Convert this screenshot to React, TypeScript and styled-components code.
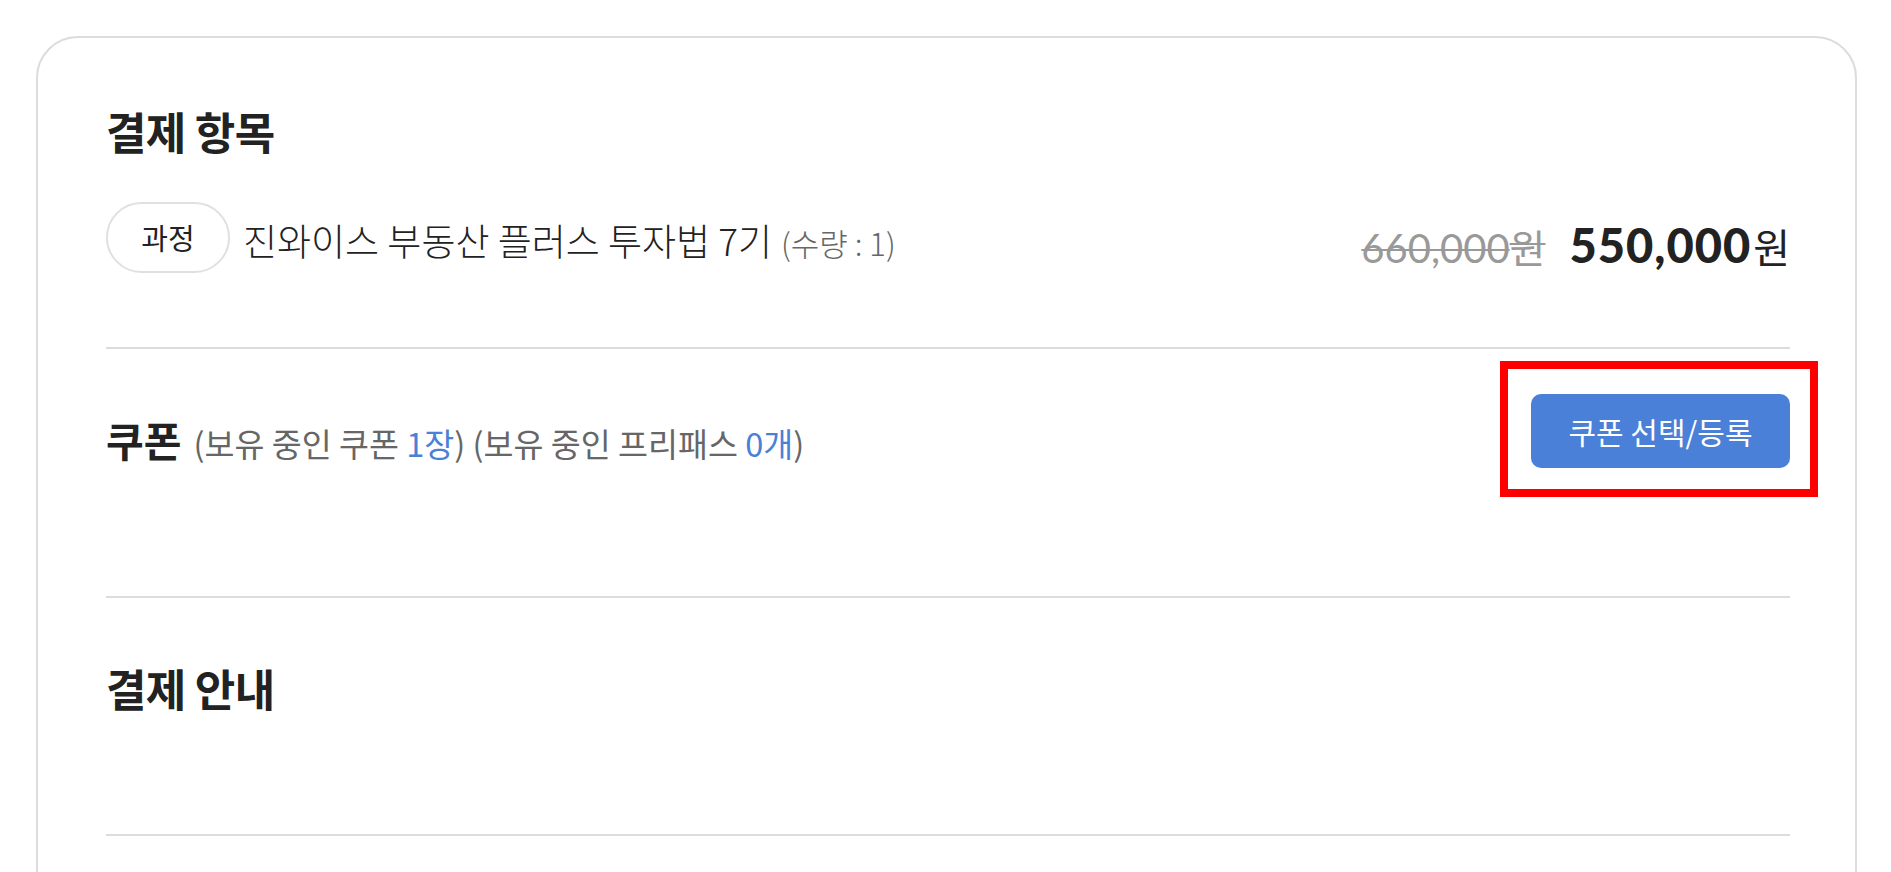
import React from "react";
import styled, { createGlobalStyle } from "styled-components";

const GlobalStyle = createGlobalStyle`
  html, body {
    margin: 0;
    padding: 0;
    background: #fff;
  }
  body {
    font-family: "Noto Sans CJK KR", "Noto Sans", sans-serif;
    color: #222;
  }
`;

const order = {
  tag: "과정",
  title: "진와이스 부동산 플러스 투자법 7기",
  quantity: 1,
  originalPrice: "660,000",
  salePrice: "550,000",
};

const App = () => {
  return (
    <>
      <GlobalStyle />
      <Page>
        <Card>
          <Section $pt={67} $pb={75}>
            <Heading>결제 항목</Heading>
            <ItemRow>
              <Tag>{order.tag}</Tag>
              <ItemTitle>
                {order.title}
                <Quantity>(수량 : {order.quantity})</Quantity>
              </ItemTitle>
              <Prices>
                <OldPrice>
                  {order.originalPrice}
                  <Won>원</Won>
                </OldPrice>
                <NewPrice>
                  {order.salePrice}
                  <Won>원</Won>
                </NewPrice>
              </Prices>
            </ItemRow>
          </Section>

          <Section $pt={45} $pb={128}>
            <CouponRow>
              <CouponTitle>
                쿠폰
                <CouponInfo>
                  (보유 중인 쿠폰 <Count>1장</Count>) (보유 중인 프리패스 <Count>0개</Count>)
                </CouponInfo>
              </CouponTitle>
              <ButtonWrap>
                <CouponButton type="button">쿠폰 선택/등록</CouponButton>
              </ButtonWrap>
            </CouponRow>
          </Section>

          <Section $pt={64} $pb={120}>
            <Heading>결제 안내</Heading>
          </Section>
        </Card>
      </Page>
    </>
  );
};

export default App;

const Page = styled.div`
  padding: 36px 34px 0 36px;
  height: 872px;
  box-sizing: border-box;
  overflow: hidden;
`;

const Card = styled.div`
  border: 2px solid #dcdcdc;
  border-radius: 42px;
  padding: 0 65px 80px 68px;
  min-height: 900px;
`;

const Section = styled.section<{ $pt: number; $pb: number }>`
  padding-top: ${(p) => p.$pt}px;
  padding-bottom: ${(p) => p.$pb}px;
  border-bottom: 2px solid #dcdcdc;
`;

const Heading = styled.h2`
  margin: 0;
  font-size: 44px;
  line-height: 52px;
  font-weight: 700;
  letter-spacing: -0.7px;
  color: #222;
`;

const ItemRow = styled.div`
  display: flex;
  align-items: center;
  height: 70px;
  margin-top: 45px;
`;

const Tag = styled.span`
  display: inline-flex;
  align-items: center;
  justify-content: center;
  box-sizing: border-box;
  width: 124px;
  height: 71px;
  border: 2px solid #e0e0e0;
  border-radius: 36px;
  font-size: 29px;
  color: #222;
  flex-shrink: 0;
`;

const ItemTitle = styled.div`
  margin-left: 13px;
  margin-top: 8px;
  font-size: 37px;
  line-height: 44px;
  font-weight: 300;
  color: #222;
  white-space: nowrap;
`;

const Quantity = styled.span`
  margin-left: 9px;
  font-size: 31px;
  color: #666;
`;

const Prices = styled.div`
  margin-left: auto;
  margin-top: 18px;
  display: flex;
  align-items: baseline;
  gap: 24px;
  line-height: 52px;
  white-space: nowrap;
`;

const OldPrice = styled.span`
  font-family: "Lato", "Noto Sans CJK KR", sans-serif;
  font-size: 40px;
  color: #999;
  text-decoration: line-through;
  text-decoration-thickness: 2px;
  & > span {
    color: #999;
    font-size: 39px;
  }
`;

const NewPrice = styled.span`
  font-family: "Lato", "Noto Sans CJK KR", sans-serif;
  font-size: 47px;
  font-weight: 900;
  letter-spacing: 1px;
  color: #222;
  & > span {
    font-size: 40px;
    font-weight: 400;
    letter-spacing: 0;
    margin-left: 2px;
  }
`;

const Won = styled.span`
  font-family: "Noto Sans CJK KR", sans-serif;
`;

const CouponRow = styled.div`
  display: flex;
  align-items: center;
  justify-content: space-between;
  height: 74px;
`;

const CouponTitle = styled.div`
  margin-top: 20px;
  font-size: 41px;
  line-height: 50px;
  font-weight: 700;
  color: #222;
  white-space: nowrap;
`;

const CouponInfo = styled.span`
  margin-left: 12px;
  font-size: 32.6px;
  font-weight: 400;
  color: #666;
`;

const Count = styled.span`
  color: #4a80d8;
`;

const ButtonWrap = styled.div`
  position: relative;

  &::after {
    content: "";
    position: absolute;
    top: -33px;
    right: -28px;
    bottom: -29px;
    left: -31px;
    border: 8px solid #ff0000;
    pointer-events: none;
  }
`;

const CouponButton = styled.button`
  display: block;
  width: 259px;
  height: 74px;
  border: none;
  border-radius: 10px;
  background: #4a80d8;
  color: #fff;
  font-family: "Noto Sans CJK KR", sans-serif;
  font-size: 30px;
  cursor: pointer;
`;
